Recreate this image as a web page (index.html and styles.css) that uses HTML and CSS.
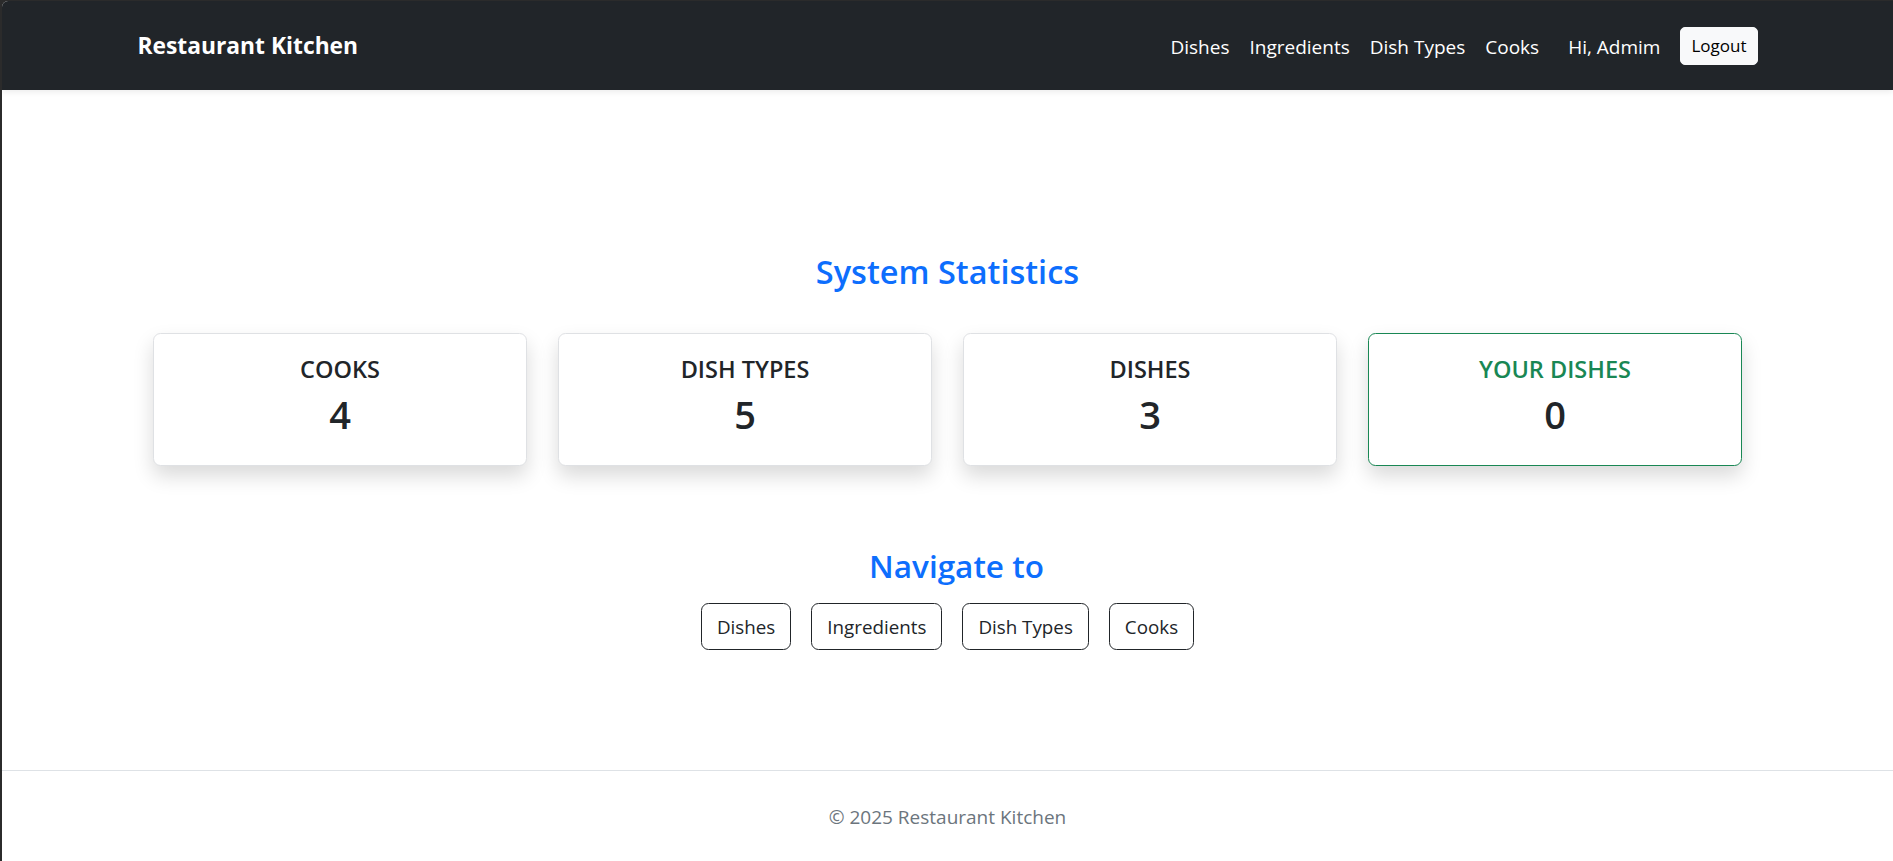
FILE: index.html
```html
<!DOCTYPE html>
<html lang="en">
<head>
<meta charset="utf-8">
<title>Restaurant Kitchen</title>
<link rel="stylesheet" href="styles.css">
</head>
<body>
<div class="window">
  <nav class="navbar">
    <div class="container nav-inner">
      <a class="brand" href="#">Restaurant Kitchen</a>
      <div class="nav-right">
        <ul class="nav-links">
          <li><a href="#">Dishes</a></li>
          <li><a href="#">Ingredients</a></li>
          <li><a href="#">Dish Types</a></li>
          <li><a href="#">Cooks</a></li>
        </ul>
        <span class="greeting">Hi, Admim</span>
        <button class="btn-logout">Logout</button>
      </div>
    </div>
  </nav>

  <main class="main">
    <div class="container">
      <h3 class="section-title">System Statistics</h3>
      <div class="stats">
        <div class="card"><h5 class="card-title">COOKS</h5><div class="card-num">4</div></div>
        <div class="card"><h5 class="card-title">DISH TYPES</h5><div class="card-num">5</div></div>
        <div class="card"><h5 class="card-title">DISHES</h5><div class="card-num">3</div></div>
        <div class="card card-success"><h5 class="card-title">YOUR DISHES</h5><div class="card-num">0</div></div>
      </div>
      <h4 class="nav-title">Navigate to</h4>
      <div class="nav-buttons">
        <a class="btn-outline" href="#">Dishes</a>
        <a class="btn-outline" href="#">Ingredients</a>
        <a class="btn-outline" href="#">Dish Types</a>
        <a class="btn-outline" href="#">Cooks</a>
      </div>
    </div>
  </main>

  <footer class="footer">© 2025 Restaurant Kitchen</footer>
</div>
</body>
</html>
```
FILE: styles.css
```css
* { box-sizing: border-box; }
html, body { margin: 0; padding: 0; }
body {
  font-family: "Open Sans", "Noto Sans", sans-serif;
  font-size: 20px;
  line-height: 1.5;
  color: #212529;
  background: #2b2b2b;
}
.window {
  margin-left: 2px;
  margin-top: 1px;
  background: #fff;
  min-height: 860px;
  border-top-left-radius: 6px;
  overflow: hidden;
}
.container {
  width: 1650px;
  margin: 0 auto;
  padding: 0 15px;
}
.navbar {
  background: #212529;
  height: 89px;
  box-shadow: 0 2px 6px rgba(0,0,0,0.08);
  position: relative;
}
.nav-inner {
  height: 100%;
  display: flex;
  align-items: center;
  justify-content: space-between;
}
.brand {
  color: #fff;
  text-decoration: none;
  font-weight: 700;
  font-size: 22.8px;
  line-height: 37px;
}
.nav-right {
  display: flex;
  align-items: center;
}
.nav-links {
  list-style: none;
  margin: 0;
  padding: 0;
  display: flex;
}
.nav-links a {
  display: block;
  color: #fff;
  text-decoration: none;
  padding: 2px 10px 0;
  font-size: 19px;
  line-height: 30px;
}
.greeting {
  color: #fff;
  font-size: 19px;
  margin: 2px 20px 0 19px;
  line-height: 30px;
}
.btn-logout {
  font-family: inherit;
  font-size: 17px;
  line-height: 26px;
  padding: 5px 10px;
  border: 1px solid #f8f9fa;
  background: #f8f9fa;
  color: #000;
  border-radius: 5px;
  margin-right: 0;
}
.main {
  padding-top: 161px;
  padding-bottom: 120px;
}
.section-title {
  margin: 0 0 40px;
  text-align: center;
  color: #0d6efd;
  font-size: 32.5px;
  line-height: 42px;
  font-weight: 600;
}
.stats {
  display: grid;
  grid-template-columns: repeat(4, 1fr);
  gap: 31px;
  padding: 0 15.5px;
}
.card {
  height: 133px;
  border: 1px solid #dfe1e4;
  border-radius: 7.5px;
  background: #fff;
  box-shadow: 0 10px 20px rgba(0,0,0,0.15);
  text-align: center;
  padding: 20px;
}
.card-title {
  margin: 0 0 6px;
  font-size: 23.5px;
  line-height: 30px;
  font-weight: 600;
}
.card-num {
  font-size: 38px;
  line-height: 48px;
  font-weight: 600;
}
.card-success { border-color: #198754; }
.card-success .card-title { color: #198754; }
.nav-title {
  margin: 82px 0 19px;
  padding-left: 18px;
  text-align: center;
  color: #0d6efd;
  font-size: 31.5px;
  line-height: 36px;
  font-weight: 600;
}
.nav-buttons {
  display: flex;
  justify-content: center;
  gap: 20px;
}
.btn-outline {
  display: inline-block;
  font-size: 18.8px;
  line-height: 30px;
  padding: 7.5px 15px;
  border: 1px solid #212529;
  border-radius: 7.5px;
  color: #212529;
  text-decoration: none;
}
.footer {
  border-top: 1px solid #dee2e6;
  text-align: center;
  color: #6c757d;
  font-size: 19px;
  line-height: 30px;
  padding: 31px 0 40px;
}
```
